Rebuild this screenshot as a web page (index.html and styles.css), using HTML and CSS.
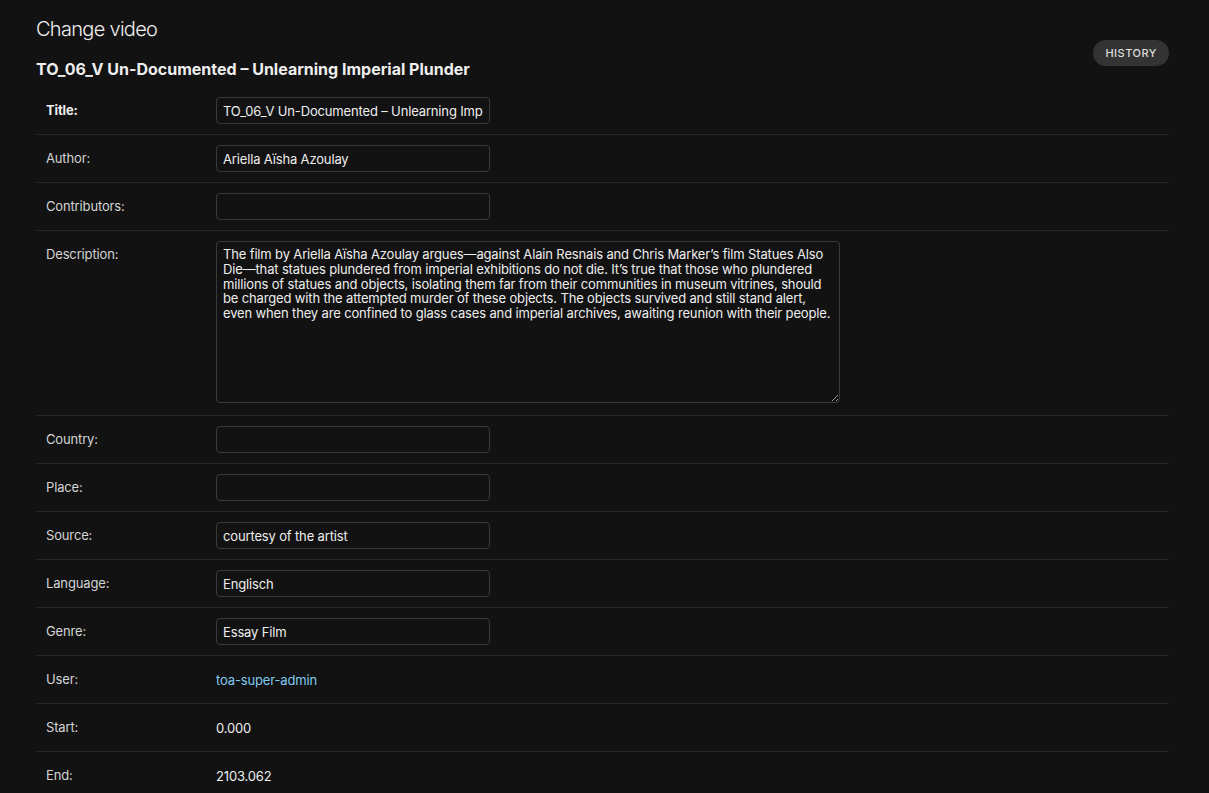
FILE: index.html
```html
<!DOCTYPE html>
<html lang="en">
<head>
<meta charset="utf-8">
<title>Change video</title>
<link rel="stylesheet" href="styles.css">
</head>
<body>
<div class="content">
  <div class="head">
    <div class="titles">
      <h1>Change video</h1>
      <h2>TO_06_V Un-Documented – Unlearning Imperial Plunder</h2>
    </div>
    <a class="history" href="#">History</a>
  </div>
  <form class="module">
    <div class="row">
      <label class="required">Title:</label>
      <input class="field" type="text" value="TO_06_V Un-Documented – Unlearning Imperial Plunder">
    </div>
    <div class="row">
      <label>Author:</label>
      <input class="field" type="text" value="Ariella Aïsha Azoulay">
    </div>
    <div class="row">
      <label>Contributors:</label>
      <input class="field" type="text" value="">
    </div>
    <div class="row">
      <label>Description:</label>
      <textarea class="area">The film by Ariella Aïsha Azoulay argues—against Alain Resnais and Chris Marker’s film Statues Also Die—that statues plundered from imperial exhibitions do not die. It’s true that those who plundered millions of statues and objects, isolating them far from their communities in museum vitrines, should be charged with the attempted murder of these objects. The objects survived and still stand alert, even when they are confined to glass cases and imperial archives, awaiting reunion with their people.</textarea>
    </div>
    <div class="row">
      <label>Country:</label>
      <input class="field" type="text" value="">
    </div>
    <div class="row">
      <label>Place:</label>
      <input class="field" type="text" value="">
    </div>
    <div class="row">
      <label>Source:</label>
      <input class="field" type="text" value="courtesy of the artist">
    </div>
    <div class="row">
      <label>Language:</label>
      <input class="field" type="text" value="Englisch">
    </div>
    <div class="row">
      <label>Genre:</label>
      <input class="field" type="text" value="Essay Film">
    </div>
    <div class="row">
      <label>User:</label>
      <div class="readonly"><a href="#">toa-super-admin</a></div>
    </div>
    <div class="row">
      <label>Start:</label>
      <div class="readonly">0.000</div>
    </div>
    <div class="row">
      <label>End:</label>
      <div class="readonly">2103.062</div>
    </div>
  </form>
</div>
</body>
</html>
```
FILE: styles.css
```css
html, body {
  margin: 0;
  padding: 0;
  background: #121212;
  overflow: hidden;
}
body {
  font-family: Inter, Roboto, "Liberation Sans", sans-serif;
  font-size: 13px;
  color: #eeeeee;
  letter-spacing: -0.15px;
}
.content {
  padding: 16px 40px 0 36px;
}
.head {
  display: flex;
  justify-content: space-between;
  align-items: flex-start;
}
h1 {
  margin: 0;
  font-size: 20px;
  font-weight: 300;
  line-height: 26px;
  letter-spacing: -0.7px;
  color: #eeeeee;
}
h2 {
  margin: 17px 0 0;
  font-size: 16px;
  font-weight: 700;
  line-height: 20px;
  letter-spacing: 0;
  color: #eeeeee;
}
.history {
  margin-top: 24px;
  display: block;
  height: 26px;
  line-height: 26px;
  padding: 0 12px;
  border-radius: 15px;
  background: #333333;
  color: #dddddd;
  font-size: 11px;
  font-weight: 500;
  letter-spacing: 0.5px;
  text-transform: uppercase;
  text-decoration: none;
}
.module {
  margin-top: 8px;
}
.row {
  display: flex;
  align-items: flex-start;
  padding: 10px;
  border-bottom: 1px solid #272727;
}
.row label {
  width: 170px;
  flex: none;
  padding-top: 6px;
  line-height: 14px;
  color: #d4d4d4;
}
.row label.required {
  font-weight: 700;
  color: #eeeeee;
}
.field {
  box-sizing: border-box;
  width: 274px;
  height: 27px;
  margin: 0;
  padding: 5px 6px;
  border: 1px solid #3a3a3a;
  border-radius: 4px;
  background: #121212;
  color: #eeeeee;
  font: inherit;
  font-size: 13px;
  letter-spacing: -0.15px;
}
.area {
  display: block;
  box-sizing: border-box;
  width: 624px;
  height: 162px;
  margin: 0 0 2px;
  padding: 5px 6px;
  border: 1px solid #3a3a3a;
  border-radius: 4px;
  background: #121212;
  color: #eeeeee;
  font: inherit;
  font-size: 13px;
  line-height: 14.75px;
  letter-spacing: -0.15px;
  resize: vertical;
}
.readonly {
  height: 27px;
  box-sizing: border-box;
  padding-top: 7px;
  line-height: 15px;
  color: #eeeeee;
}
.readonly a {
  color: #81c9f0;
  text-decoration: none;
}
```
